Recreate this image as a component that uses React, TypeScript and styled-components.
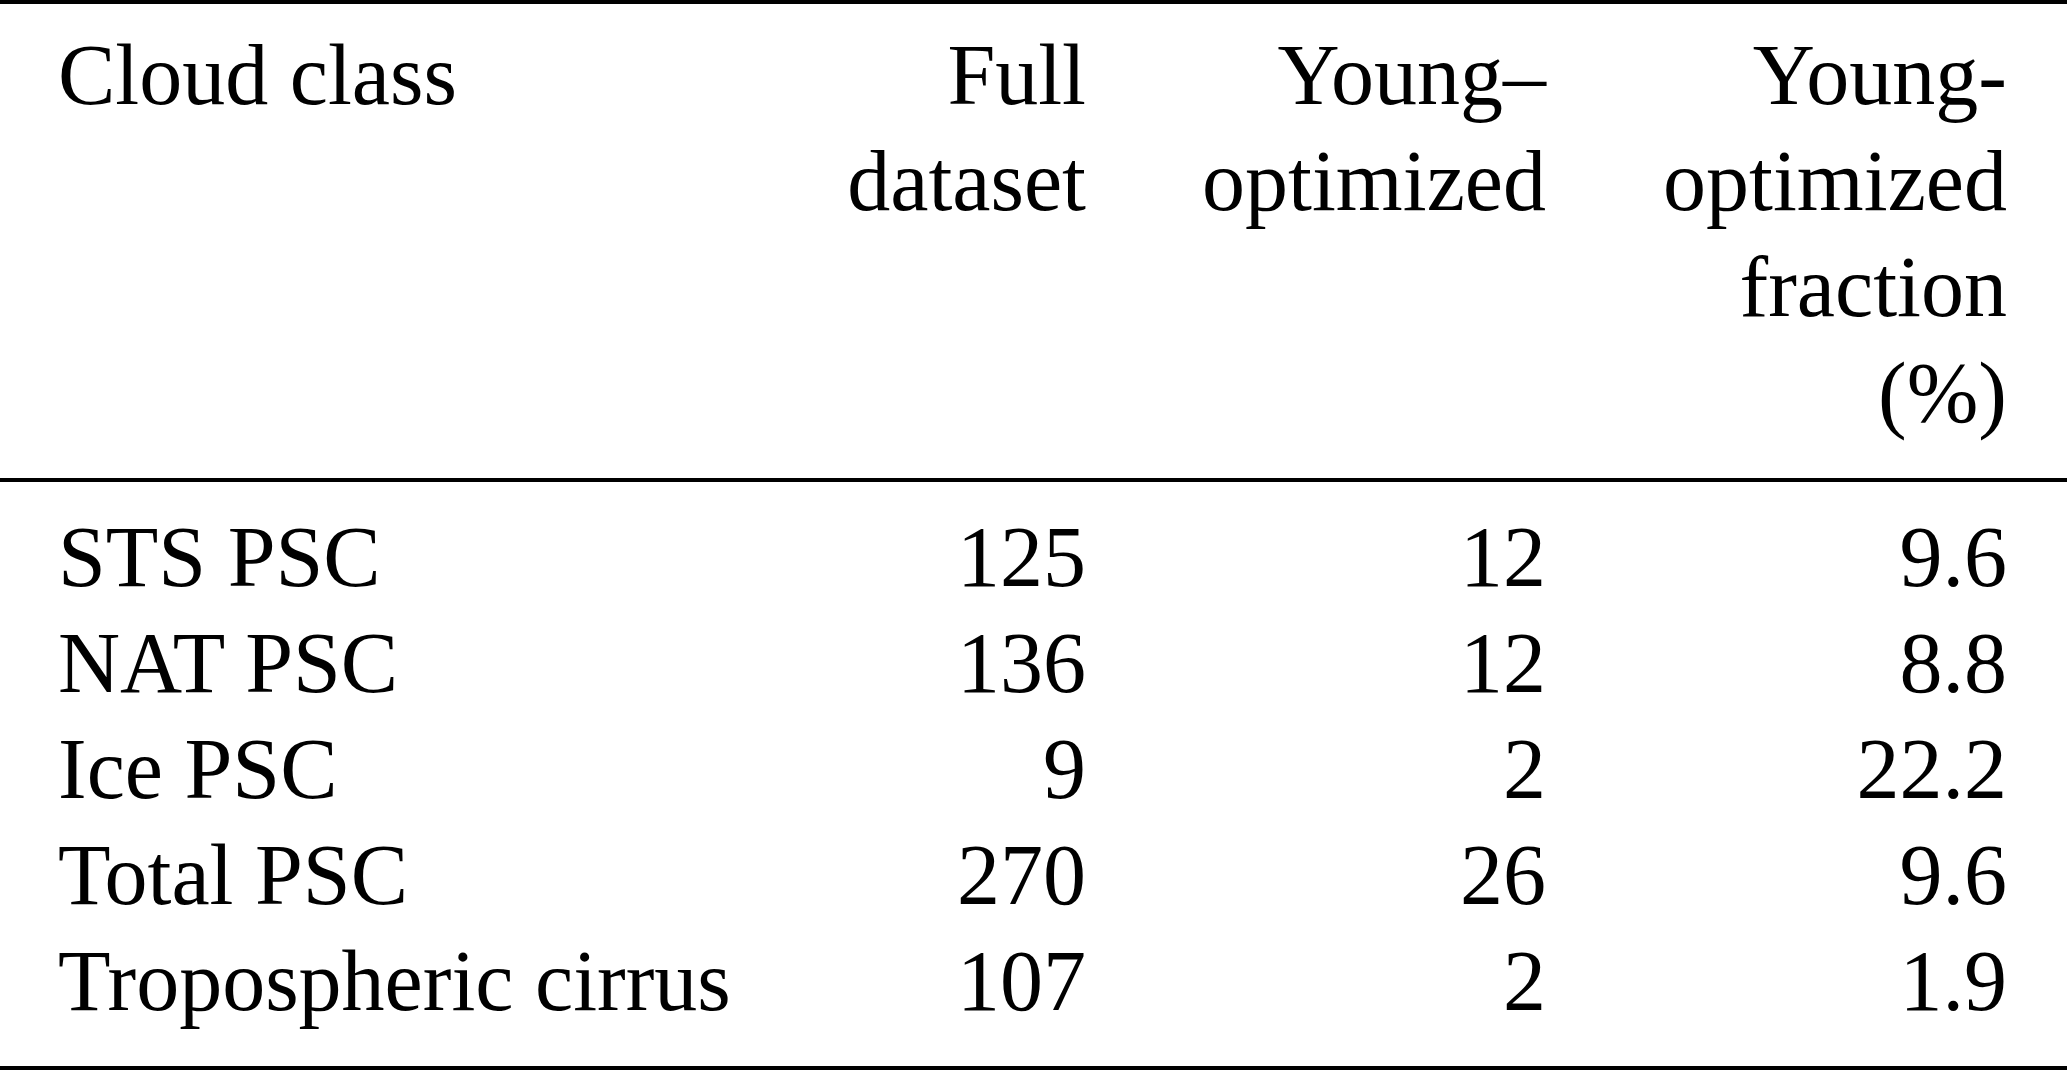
import styled, { createGlobalStyle } from 'styled-components'

const GlobalStyle = createGlobalStyle`
  html, body {
    margin: 0;
    padding: 0;
    background: #fff;
  }
  body {
    font-family: "Liberation Serif", "Times New Roman", serif;
    color: #000;
  }
`

const Table = styled.div`
  width: 2067px;
  font-size: 86px;
  line-height: 106px;
  border-top: 4px solid #000;
  border-bottom: 4px solid #000;
`

const Head = styled.div`
  padding: 18px 60px 32px 58px;
  border-bottom: 4px solid #000;
`

const Body = styled.div`
  padding: 22px 60px 32px 58px;
`

const Row = styled.div`
  display: grid;
  grid-template-columns: 1fr 286px 460px 461px;
`

const Cell = styled.div<{ $num?: boolean }>`
  text-align: ${(p) => (p.$num ? 'right' : 'left')};
  white-space: nowrap;
`

const Line = styled.span`
  display: block;
`

const header = [
  ['Cloud class'],
  ['Full', 'dataset'],
  ['Young–', 'optimized'],
  ['Young-', 'optimized', 'fraction', '(%)'],
]

const rows = [
  ['STS PSC', '125', '12', '9.6'],
  ['NAT PSC', '136', '12', '8.8'],
  ['Ice PSC', '9', '2', '22.2'],
  ['Total PSC', '270', '26', '9.6'],
  ['Tropospheric cirrus', '107', '2', '1.9'],
]

export default function App() {
  return (
    <>
      <GlobalStyle />
      <Table>
        <Head>
          <Row>
            {header.map((lines, i) => (
              <Cell key={i} $num={i > 0}>
                {lines.map((l) => (
                  <Line key={l}>{l}</Line>
                ))}
              </Cell>
            ))}
          </Row>
        </Head>
        <Body>
          {rows.map((r) => (
            <Row key={r[0]}>
              {r.map((v, i) => (
                <Cell key={i} $num={i > 0}>
                  {v}
                </Cell>
              ))}
            </Row>
          ))}
        </Body>
      </Table>
    </>
  )
}
